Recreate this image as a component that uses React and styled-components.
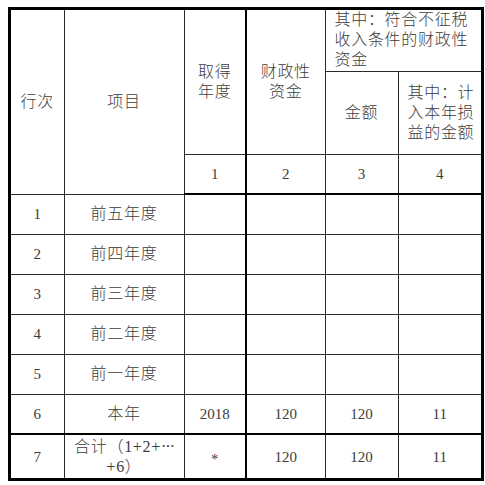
import React from 'react';
import styled, { createGlobalStyle } from 'styled-components';

const widths = [53, 120, 62, 79, 73, 83];

const rows = [
  { no: '1', item: '前五年度' },
  { no: '2', item: '前四年度' },
  { no: '3', item: '前三年度' },
  { no: '4', item: '前二年度' },
  { no: '5', item: '前一年度' },
  { no: '6', item: '本年', year: '2018', fund: '120', free: '120', income: '11', thickBottom: true },
];

function App() {
  return (
    <>
      <GlobalStyle />
      <Frame>
        <Sheet>
          <colgroup>
            {widths.map((w, i) => (
              <Col key={i} $w={w} />
            ))}
          </colgroup>
          <thead>
            <Row $h={61}>
              <Cell rowSpan={3}>行次</Cell>
              <Cell rowSpan={3}>项目</Cell>
              <Cell rowSpan={2}>
                取得
                <br />
                年度
              </Cell>
              <Cell rowSpan={2} $thickLeft>
                财政性
                <br />
                资金
              </Cell>
              <Cell colSpan={2} $left>
                其中：符合不征税
                <br />
                收入条件的财政性
                <br />
                资金
              </Cell>
            </Row>
            <Row $h={83}>
              <Cell>金额</Cell>
              <Cell $left>
                其中：计
                <br />
                入本年损
                <br />
                益的金额
              </Cell>
            </Row>
            <Row $h={40}>
              <Cell $num $thickBottom>1</Cell>
              <Cell $num $thickBottom $thickLeft>2</Cell>
              <Cell $num $thickBottom>3</Cell>
              <Cell $num $thickBottom>4</Cell>
            </Row>
          </thead>
          <tbody>
            {rows.map((r) => (
              <Row key={r.no} $h={40}>
                <Cell $num $thickBottom={r.thickBottom}>{r.no}</Cell>
                <Cell $thickBottom={r.thickBottom}>{r.item}</Cell>
                <Cell $num $thickBottom={r.thickBottom}>{r.year}</Cell>
                <Cell $num $thickLeft $thickBottom={r.thickBottom}>{r.fund}</Cell>
                <Cell $num $thickBottom={r.thickBottom}>{r.free}</Cell>
                <Cell $num $thickBottom={r.thickBottom}>{r.income}</Cell>
              </Row>
            ))}
            <Row $h={44}>
              <Cell $num>7</Cell>
              <Cell>
                合计（1+2+<Dots>···</Dots>
                <br />
                +6）
              </Cell>
              <Cell $num>
                <Star>*</Star>
              </Cell>
              <Cell $num $thickLeft>120</Cell>
              <Cell $num>120</Cell>
              <Cell $num>11</Cell>
            </Row>
          </tbody>
        </Sheet>
      </Frame>
    </>
  );
}

const GlobalStyle = createGlobalStyle`
  body {
    margin: 0;
    background: #fff;
    font-family: "Liberation Serif", "Noto Sans CJK SC", serif;
    color: #3c3c3c;
  }
`;

const Frame = styled.div`
  margin: 7px 0 0 8px;
  width: 470px;
  border: 3px solid #000;
`;

const Sheet = styled.table`
  width: 470px;
  table-layout: fixed;
  border-collapse: collapse;
  border-style: hidden;
`;

const Col = styled.col`
  width: ${(p) => p.$w}px;
`;

const Row = styled.tr`
  height: ${(p) => p.$h}px;
`;

const Cell = styled.td`
  padding: ${(p) => (p.$left ? '0 0 0 9px' : '0')};
  border: 1px solid #2a2a2a;
  border-left: ${(p) => (p.$thickLeft ? '2px solid #000' : '1px solid #2a2a2a')};
  border-bottom: ${(p) => (p.$thickBottom ? '2px solid #000' : '1px solid #2a2a2a')};
  text-align: ${(p) => (p.$left ? 'left' : 'center')};
  vertical-align: middle;
  font-size: ${(p) => (p.$num ? '15px' : '16px')};
  font-weight: 300;
  line-height: 20px;
  letter-spacing: ${(p) => (p.$num ? '0' : '0.7px')};
  white-space: nowrap;
`;

const Dots = styled.span`
  letter-spacing: -1px;
`;

const Star = styled.span`
  display: inline-block;
  vertical-align: -4px;
`;

export default App;
